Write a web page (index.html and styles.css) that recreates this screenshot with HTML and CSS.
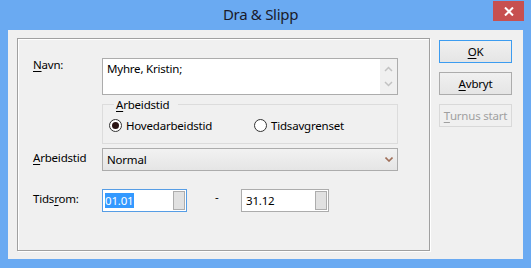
FILE: index.html
```html
<!DOCTYPE html>
<html lang="nb">
<head>
    <meta charset="UTF-8">
    <title>Dra &amp; Slipp</title>
    <link rel="stylesheet" href="styles.css">
</head>
<body>
    <div class="window">
        <div class="titlebar">
            <span class="title">Dra &amp; Slipp</span>
            <span class="close">
                <svg width="10" height="9" viewBox="0 0 10 9"><path d="M1 0.5 L9 8.5 M9 0.5 L1 8.5" stroke="#fff" stroke-width="2"/></svg>
            </span>
        </div>
        <div class="client">
            <div class="panel">
                <div class="row row-navn">
                    <span class="lbl"><u>N</u>avn:</span>
                    <div class="memo">
                        <span class="memo-text">Myhre, Kristin;</span>
                        <div class="vscroll">
                            <svg width="9" height="6" viewBox="0 0 9 6"><path d="M1 5 L4.5 1.5 L8 5" fill="none" stroke="#c2c2c2" stroke-width="1.5"/></svg>
                            <svg width="9" height="6" viewBox="0 0 9 6"><path d="M1 1 L4.5 4.5 L8 1" fill="none" stroke="#c2c2c2" stroke-width="1.5"/></svg>
                        </div>
                    </div>
                </div>
                <div class="row row-group">
                    <span class="lbl"></span>
                    <fieldset class="group">
                        <legend><u>A</u>rbeidstid</legend>
                        <div class="radios">
                            <span class="radio radio-first"><span class="dot checked"></span>Hovedarbeidstid</span>
                            <span class="radio"><span class="dot"></span>Tidsavgrenset</span>
                        </div>
                    </fieldset>
                </div>
                <div class="row row-select">
                    <span class="lbl"><u>A</u>rbeidstid</span>
                    <div class="combo">
                        <span>Normal</span>
                        <svg width="8" height="5" viewBox="0 0 8 5"><path d="M0.5 0.5 L4 4 L7.5 0.5" fill="none" stroke="#a0705a" stroke-width="1.6"/></svg>
                    </div>
                </div>
                <div class="row row-range">
                    <span class="lbl">Tids<u>r</u>om:</span>
                    <div class="date date-focus"><span class="sel">01.01</span><span class="spin"></span></div>
                    <span class="dash">-</span>
                    <div class="date date-wide"><span>31.12</span><span class="spin"></span></div>
                </div>
            </div>
            <div class="buttons">
                <span class="btn btn-default"><u>O</u>K</span>
                <span class="btn"><u>A</u>vbryt</span>
                <span class="btn btn-disabled"><u>T</u>urnus start</span>
            </div>
        </div>
    </div>
</body>
</html>
```

FILE: styles.css
```css
body { margin: 0; font-family: "Noto Sans", "Open Sans", sans-serif; font-size: 11.5px; letter-spacing: -0.2px; color: #000; }
u { text-decoration-thickness: 1px; text-underline-offset: 2px; }
.window { width: 531px; height: 268px; box-sizing: border-box; background: #6aaaf2; padding: 0 8px 9px 8px; display: flex; flex-direction: column; position: relative; }
.titlebar { height: 30px; line-height: 29px; text-align: center; padding-right: 10px; }
.title { font-size: 15px; letter-spacing: -0.3px; color: #1a1a2a; }
.close { position: absolute; top: 1px; right: 7px; width: 31px; height: 20px; background: #c75050; display: flex; align-items: center; justify-content: center; }
.client { flex: 1; background: #f0f0f0; display: flex; padding: 8px 0 0 9px; }
.panel { width: 413px; height: 213px; box-sizing: border-box; border: 1px solid #a0a0a0; box-shadow: inset 1px 1px #fff, 1px 1px #fff; padding: 19px 31px 0 15px; }
.row { display: flex; align-items: flex-start; }
.lbl { width: 69px; flex: none; line-height: 15px; }
.row-navn .lbl { margin-top: -1px; }
.memo { width: 296px; height: 37px; box-sizing: border-box; border: 1px solid #acacac; background: #fff; display: flex; justify-content: space-between; }
.memo-text { padding: 2px 0 0 4px; line-height: 15px; }
.vscroll { width: 17px; background: #f0f0f0; display: flex; flex-direction: column; align-items: center; justify-content: space-around; padding: 2px 0; }
.row-group { margin-top: 2px; }
.group { width: 296px; box-sizing: border-box; margin: 0; border: 1px solid #dcdcdc; padding: 6px 0 10px 6px; }
.group legend { padding: 0 9px 0 2px; margin-left: 5px; line-height: 15px; }
.radios { display: flex; line-height: 15px; }
.radio { display: flex; align-items: center; gap: 4px; }
.radio-first { width: 145px; }
.dot { width: 13px; height: 13px; box-sizing: border-box; border: 1px solid #333; border-radius: 50%; background: #fff; display: flex; align-items: center; justify-content: center; }
.dot.checked::after { content: ""; width: 7px; height: 7px; border-radius: 50%; background: #2a1414; }
.row-select { margin-top: 4px; }
.row-select .lbl { margin-top: 2px; }
.combo { width: 296px; height: 23px; box-sizing: border-box; border: 1px solid #acacac; background: linear-gradient(#f2f2f2, #e5e5e5); display: flex; justify-content: space-between; align-items: center; padding: 0 4px 0 4px; line-height: 15px; }
.row-range { margin-top: 18px; }
.row-range .lbl { margin-top: 2px; }
.date { width: 85px; height: 23px; box-sizing: border-box; border: 1px solid #acacac; background: #fff; display: flex; justify-content: space-between; padding: 1px 1px 1px 2px; line-height: 15px; }
.date span:first-child { margin-top: 2px; height: 15px; }
.date-focus { border-color: #569de5; }
.date-wide { width: 88px; padding-left: 4px; }
.sel { background: #3399ff; color: #fff; padding-right: 1px; }
.spin { width: 12px; height: 19px; box-sizing: border-box; border: 1px solid #adadad; background: #e1e1e1; }
.dash { width: 54px; box-sizing: border-box; padding-left: 28px; line-height: 15px; margin-top: 0; }
.buttons { display: flex; flex-direction: column; gap: 9px; margin: 2px 0 0 9px; }
.btn { width: 73px; height: 23px; box-sizing: border-box; border: 1px solid #acacac; background: linear-gradient(#f0f0f0, #e5e5e5); display: flex; align-items: center; justify-content: center; }
.btn-default { border-color: #3c9cf0; }
.btn-disabled { border-color: #d9d9d9; background: #f0f0f0; color: #a0a0a0; }
```
